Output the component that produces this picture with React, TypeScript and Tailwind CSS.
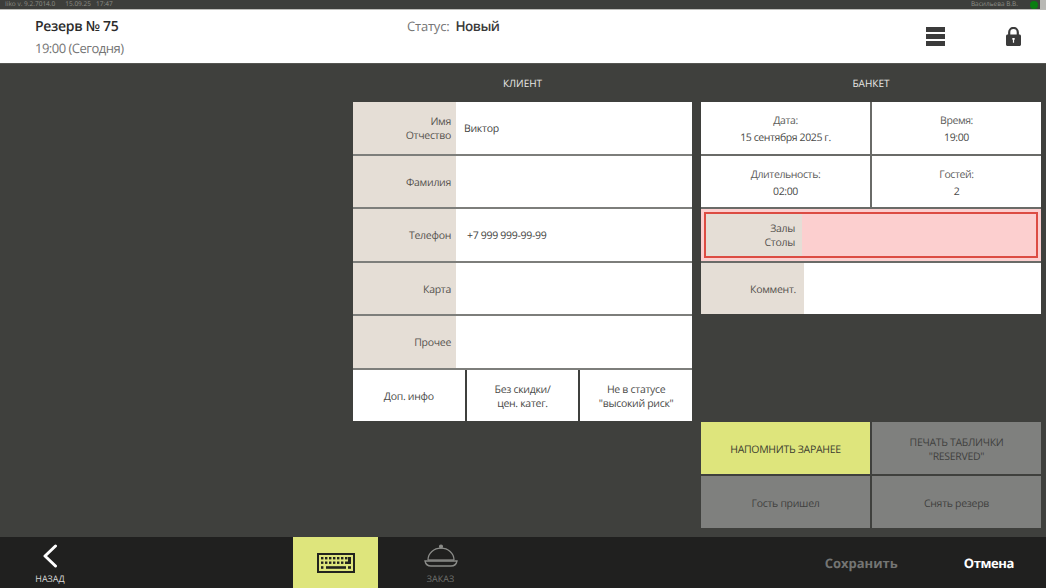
import { useMemo } from 'react';

const clientRows = [
  { label: ['Имя', 'Отчество'], value: 'Виктор', pad: 'pl-2' },
  { label: ['Фамилия'], value: '', pad: 'pl-2' },
  { label: ['Телефон'], value: '+7 999 999-99-99', pad: 'pl-[11px]' },
  { label: ['Карта'], value: '', pad: 'pl-2' },
  { label: ['Прочее'], value: '', pad: 'pl-2' },
];

function LabelCell({ lines, className }: { lines: string[]; className?: string }) {
  return (
    <div className={`flex flex-col justify-center shrink-0 bg-[#e5ded6] pt-[4px] text-right text-[10.5px] leading-[13.5px] tracking-[-0.3px] text-[#55524e] ${className ?? ''}`}>
      {lines.map((l) => (
        <div key={l}>{l}</div>
      ))}
    </div>
  );
}

function InfoCell({ title, value }: { title: string; value: string }) {
  return (
    <div className="flex flex-col items-center justify-center gap-[3px] bg-white pt-[4px] text-[10.5px] leading-[14px] tracking-[-0.4px] text-[#4a4a48]">
      <div className="text-[#5c5c5a]">{title}</div>
      <div>{value}</div>
    </div>
  );
}

function ActionCell({ lines, yellow }: { lines: string[]; yellow?: boolean }) {
  return (
    <div className={`flex flex-col items-center justify-center pt-[3px] text-[10.5px] leading-[14px] tracking-[-0.3px] ${yellow ? 'bg-[#dee57c] text-[#3c3d30]' : 'bg-[#7f807e] text-[#3f403e]'}`}>
      {lines.map((l) => (
        <div key={l}>{l}</div>
      ))}
    </div>
  );
}

function KeyboardIcon() {
  const top = useMemo(() => [4, 8, 12, 16, 20, 24, 28], []);
  const mid = useMemo(() => [4, 8, 12, 16, 20, 24], []);
  return (
    <svg width="38" height="20" viewBox="0 0 38 20" fill="none">
      <rect x="1" y="1" width="36" height="18" stroke="#22231e" strokeWidth="2" />
      <g fill="#22231e">
        {top.map((x) => (
          <rect key={`a${x}`} x={x} y="4" width="2.4" height="2.4" />
        ))}
        {mid.map((x) => (
          <rect key={`b${x}`} x={x} y="8.5" width="2.4" height="2.4" />
        ))}
        <path d="M31 4h3v7h-6V8.5h3z" />
        <rect x="4" y="13.2" width="2.4" height="2.6" />
        <rect x="9" y="13.2" width="20" height="2.6" />
        <rect x="31" y="13.2" width="3" height="2.6" />
      </g>
    </svg>
  );
}

function ClocheIcon() {
  return (
    <svg width="34" height="24" viewBox="0 0 34 24" fill="none" stroke="#8b8c89" strokeWidth="1.3">
      <circle cx="17" cy="2.6" r="1.4" fill="#8b8c89" />
      <path d="M4 16C4 9 10 4.2 17 4.2S30 9 30 16" />
      <path d="M1 17h32c-.6 3-3 5-6 5H7c-3 0-5.4-2-6-5z" />
      <path d="M4 16h26" />
    </svg>
  );
}

function LockIcon() {
  return (
    <svg width="15" height="19" viewBox="0 0 15 19" className="ml-[61px] mr-[25px]">
      <path d="M3.2 8V5.2a4.3 4.3 0 0 1 8.6 0V8" fill="none" stroke="#3b3b3b" strokeWidth="2.2" />
      <path fillRule="evenodd" fill="#3b3b3b" d="M1.5 7.6h12c.8 0 1.5.7 1.5 1.5v8.4c0 .8-.7 1.5-1.5 1.5h-12C.7 19 0 18.3 0 17.5V9.100C0 8.300.7 7.600 1.500 7.600zM6.300 11v1.800h.6V15.800h1.200V12.800h.6V11z" />
    </svg>
  );
}

export default function App() {
  return (
    <div className="flex h-[588px] w-[1046px] flex-col overflow-hidden bg-[#3f403d] font-['Open_Sans',sans-serif] [text-rendering:geometricPrecision]">
      <div className="flex h-[9px] shrink-0 items-center justify-between bg-[#3d3e3b] pl-[5px] text-[6.5px] leading-none text-[#8d8e87]">
        <div className="flex gap-[10px]">
          <span>Iiko v. 9.2.7014.0</span>
          <span>15.09.25&nbsp;&nbsp;&nbsp;17:47</span>
        </div>
        <div className="flex items-center">
          <span className="mr-[12px]">Васильева В.В.</span>
          <span className="mr-[2px] h-[8px] w-[8px] rounded-full bg-[#0b7d12]" />
          <span className="h-[9px] w-[6px] bg-[#b9b9b5]" />
        </div>
      </div>

      <header className="flex h-[54px] shrink-0 items-start border-t border-[#bdbdb9] bg-white">
        <div className="w-[372px] pl-[35px] pt-[7px]">
          <div className="text-[14px] leading-[20px] font-semibold tracking-[-0.3px] text-[#2b2b2b]">Резерв № 75</div>
          <div className="mt-[1px] text-[13px] leading-[20px] tracking-[-0.5px] text-[#757575]">19:00 (Сегодня)</div>
        </div>
        <div className="flex items-baseline gap-[6px] pl-[35px] pt-[6px] leading-[20px]">
          <span className="text-[13px] tracking-[-0.2px] text-[#757575]">Статус:</span>
          <span className="text-[13.5px] font-semibold tracking-[-0.5px] text-[#3a3a3a]">Новый</span>
        </div>
        <div className="ml-auto flex items-center self-center">
          <div className="flex w-[19px] flex-col gap-[2.500px]">
            <div className="h-[4.500px] bg-[#3b3b3b]" />
            <div className="h-[4.500px] bg-[#3b3b3b]" />
            <div className="h-[4.500px] bg-[#3b3b3b]" />
          </div>
          <LockIcon />
        </div>
      </header>

      <main className="flex min-h-0 flex-1 gap-[9px] border-t border-[#555652] pl-[353px] pr-[5px]">
        <section className="w-[339px]">
          <h2 className="flex h-[38px] items-center justify-center text-[10px] text-[#e8e8e6]">КЛИЕНТ</h2>
          <div className="grid h-[319px] grid-rows-6 gap-[2px] bg-[#7d7e7b]">
            {clientRows.map((r) => (
              <div key={r.label[0]} className="flex bg-white">
                <LabelCell lines={r.label} className="w-[103px] pr-[5px]" />
                <div className={`flex items-center pt-[4px] text-[10.5px] tracking-[-0.3px] text-[#444442] ${r.pad}`}>{r.value}</div>
              </div>
            ))}
            <div className="grid grid-cols-3 gap-[2px] bg-[#3f403d] text-[10.5px] leading-[14px] tracking-[-0.3px] text-[#4a4a48]">
              <div className="flex items-center justify-center bg-white pt-[3px]">Доп. инфо</div>
              <div className="flex items-center justify-center bg-white pt-[3px] text-center">
                Без скидки/
                <br />
                цен. катег.
              </div>
              <div className="flex items-center justify-center bg-white pt-[3px] text-center">
                Не в статусе
                <br />
                "высокий риск"
              </div>
            </div>
          </div>
        </section>

        <section className="w-[340px]">
          <h2 className="flex h-[38px] items-center justify-center text-[10px] text-[#e8e8e6]">БАНКЕТ</h2>
          <div className="grid h-[212px] grid-cols-2 grid-rows-4 gap-[2px] bg-[#6a6b68]">
            <InfoCell title="Дата:" value="15 сентября 2025 г." />
            <InfoCell title="Время:" value="19:00" />
            <InfoCell title="Длительность:" value="02:00" />
            <InfoCell title="Гостей:" value="2" />
            <div className="col-span-2 flex bg-[#fbd0d0] p-[3px]">
              <div className="flex flex-1 border-[2.500px] border-[#dc4c43] bg-[#fccfcf]">
                <LabelCell lines={['Залы', 'Столы']} className="w-[96px] pr-[7px]" />
              </div>
            </div>
            <div className="col-span-2 flex bg-white">
              <LabelCell lines={['Коммент.']} className="w-[103px] pr-[8px]" />
            </div>
          </div>
          <div className="mt-[108px] grid h-[106px] grid-cols-2 grid-rows-2 gap-[2px]">
            <ActionCell lines={['НАПОМНИТЬ ЗАРАНЕЕ']} yellow />
            <ActionCell lines={['ПЕЧАТЬ ТАБЛИЧКИ', '"RESERVED"']} />
            <ActionCell lines={['Гость пришел']} />
            <ActionCell lines={['Снять резерв']} />
          </div>
        </section>
      </main>

      <footer className="flex h-[51px] shrink-0 items-stretch bg-[#20201f]">
        <div className="flex w-[100px] flex-col items-center pt-[7px]">
          <svg width="16" height="24" viewBox="0 0 16 24" fill="none" stroke="#ffffff" strokeWidth="3" strokeLinecap="round" strokeLinejoin="round">
            <path d="M13.500 2L3 12l10.500 10" />
          </svg>
          <span className="mt-[5px] text-[9px] leading-[12px] text-[#d8d8d6]">НАЗАД</span>
        </div>
        <div className="ml-[193px] flex w-[85px] items-center justify-center bg-[#dee57c]">
          <KeyboardIcon />
        </div>
        <div className="ml-[20px] flex w-[85px] flex-col items-center pt-[7px]">
          <ClocheIcon />
          <span className="mt-[5px] text-[9px] leading-[12px] text-[#6f706d]">ЗАКАЗ</span>
        </div>
        <div className="ml-auto flex items-center pr-[32px] pt-[3px] text-[13px] font-bold">
          <span className="text-[#747573]">Сохранить</span>
          <span className="ml-[66px] tracking-[-0.4px] text-white">Отмена</span>
        </div>
      </footer>
    </div>
  );
}
